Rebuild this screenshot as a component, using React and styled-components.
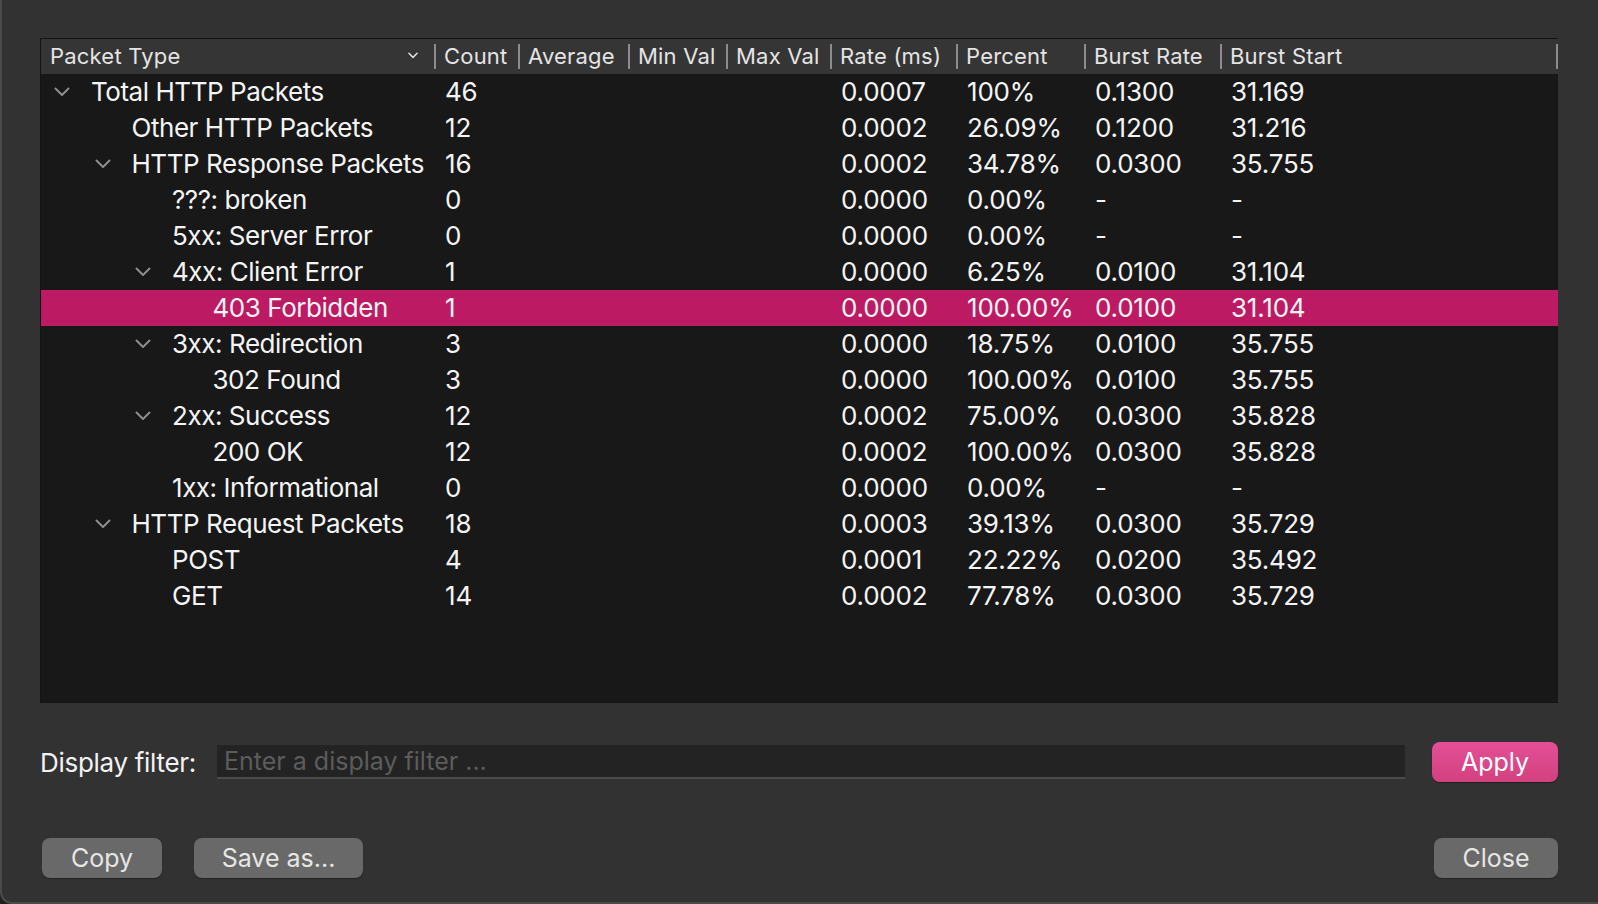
import React from 'react'
import styled, { createGlobalStyle } from 'styled-components'

const GlobalStyle = createGlobalStyle`
  html, body {
    margin: 0;
    padding: 0;
    background: #1f1f1f;
    overflow: hidden;
  }
  body {
    font-family: Inter, "Open Sans", "Liberation Sans", sans-serif;
    -webkit-font-smoothing: antialiased;
  }
`

const COLS = '393px 84px 110px 98px 104px 126px 128px 136px 1fr'

const Window = styled.div`
  box-sizing: border-box;
  width: 1598px;
  height: 904px;
  background: #323232;
  border-left: 2px solid #4a4a4a;
  border-bottom: 2px solid #4a4a4a;
  border-bottom-left-radius: 12px;
  padding: 38px 40px 24px 38px;
  display: flex;
  flex-direction: column;
`

const Table = styled.div`
  height: 665px;
  background: #181818;
  border: 1px solid #141414;
  border-right: none;
  display: flex;
  flex-direction: column;
`

const HeaderRow = styled.div`
  display: grid;
  grid-template-columns: ${COLS};
  height: 35px;
  background: #353535;
`

const HeaderCell = styled.div`
  display: flex;
  align-items: center;
  color: #e4e4e4;
  font-size: 22px;
  letter-spacing: 0.2px;
  padding-bottom: 2px;
  padding-left: ${p => (p.$first ? '9px' : '0')};
  padding-right: ${p => (p.$first ? '16px' : '0')};
`

const Divider = styled.span`
  width: 2px;
  height: 25px;
  margin-top: 2px;
  background: #8c8c8c;
  margin-right: ${p => (p.$end ? '0' : '8px')};
  flex-shrink: 0;
`

const HeaderLabel = styled.span`
  flex: 1;
  white-space: nowrap;
`

const Row = styled.div`
  display: grid;
  grid-template-columns: ${COLS};
  height: 36px;
  padding-bottom: 1px;
  box-sizing: border-box;
  align-items: center;
  background: ${p => (p.$selected ? '#bc1b64' : 'transparent')};
  color: #f4f4f4;
  font-size: 26px;
  letter-spacing: -0.2px;
`

const NameCell = styled.div`
  display: flex;
  align-items: center;
  padding-left: ${p => 13 + p.$level * 40.5}px;
  letter-spacing: -0.45px;
  white-space: nowrap;
`

const Toggle = styled.span`
  width: 37px;
  flex-shrink: 0;
  display: flex;
  align-items: center;
`

const Cell = styled.div`
  padding-left: 11px;
  white-space: nowrap;
`

const FilterBar = styled.div`
  display: flex;
  align-items: center;
  margin-top: 39px;
  height: 40px;
`

const FilterLabel = styled.label`
  width: 177px;
  flex-shrink: 0;
  color: #f2f2f2;
  font-size: 26px;
  letter-spacing: -0.3px;
`

const FilterInput = styled.input`
  flex: 1;
  height: 34px;
  box-sizing: border-box;
  background: #232323;
  border: none;
  border-bottom: 2px solid #4b4b4b;
  color: #eee;
  font-family: inherit;
  font-size: 25px;
  padding: 0 7px;
  outline: none;

  &::placeholder {
    color: #5c5c5c;
  }
`

const Button = styled.button`
  box-sizing: border-box;
  height: 40px;
  width: ${p => p.$width}px;
  border: none;
  border-radius: 8px;
  font-family: inherit;
  font-size: 25px;
  color: ${p => (p.$primary ? '#ffffff' : '#e6e6e6')};
  background: ${p =>
    p.$primary ? 'linear-gradient(#e44f96, #d3417f)' : '#696969'};
  box-shadow: 0 1px 1px rgba(0, 0, 0, 0.35);
  padding: 0;
`

const ApplyButton = styled(Button)`
  margin-left: 27px;
`

const ButtonBar = styled.div`
  display: flex;
  align-items: center;
  gap: 32px;
  margin-top: 56px;
  padding-left: 2px;
`

const Spacer = styled.div`
  flex: 1;
`

const Chevron = ({ size = 16, color = '#8d8d8d', weight = 2 }) => (
  <svg width={size} height={size / 2 + 2} viewBox="0 0 16 10">
    <path d="M1.5 1.5 L8 8 L14.5 1.5" fill="none" stroke={color} strokeWidth={weight} strokeLinecap="round" strokeLinejoin="round" />
  </svg>
)

const columns = ['Packet Type', 'Count', 'Average', 'Min Val', 'Max Val', 'Rate (ms)', 'Percent', 'Burst Rate', 'Burst Start']

const rows = [
  { level: 0, open: true, name: 'Total HTTP Packets', count: '46', rate: '0.0007', pct: '100%', br: '0.1300', bs: '31.169' },
  { level: 1, name: 'Other HTTP Packets', count: '12', rate: '0.0002', pct: '26.09%', br: '0.1200', bs: '31.216' },
  { level: 1, open: true, name: 'HTTP Response Packets', count: '16', rate: '0.0002', pct: '34.78%', br: '0.0300', bs: '35.755' },
  { level: 2, name: '???: broken', count: '0', rate: '0.0000', pct: '0.00%', br: '-', bs: '-' },
  { level: 2, name: '5xx: Server Error', count: '0', rate: '0.0000', pct: '0.00%', br: '-', bs: '-' },
  { level: 2, open: true, name: '4xx: Client Error', count: '1', rate: '0.0000', pct: '6.25%', br: '0.0100', bs: '31.104' },
  { level: 3, name: '403 Forbidden', count: '1', rate: '0.0000', pct: '100.00%', br: '0.0100', bs: '31.104', selected: true },
  { level: 2, open: true, name: '3xx: Redirection', count: '3', rate: '0.0000', pct: '18.75%', br: '0.0100', bs: '35.755' },
  { level: 3, name: '302 Found', count: '3', rate: '0.0000', pct: '100.00%', br: '0.0100', bs: '35.755' },
  { level: 2, open: true, name: '2xx: Success', count: '12', rate: '0.0002', pct: '75.00%', br: '0.0300', bs: '35.828' },
  { level: 3, name: '200 OK', count: '12', rate: '0.0002', pct: '100.00%', br: '0.0300', bs: '35.828' },
  { level: 2, name: '1xx: Informational', count: '0', rate: '0.0000', pct: '0.00%', br: '-', bs: '-' },
  { level: 1, open: true, name: 'HTTP Request Packets', count: '18', rate: '0.0003', pct: '39.13%', br: '0.0300', bs: '35.729' },
  { level: 2, name: 'POST', count: '4', rate: '0.0001', pct: '22.22%', br: '0.0200', bs: '35.492' },
  { level: 2, name: 'GET', count: '14', rate: '0.0002', pct: '77.78%', br: '0.0300', bs: '35.729' },
]

export default function App() {
  return (
    <>
      <GlobalStyle />
      <Window>
        <Table>
          <HeaderRow>
            {columns.map((c, i) => (
              <HeaderCell key={c} $first={i === 0}>
                {i > 0 && <Divider />}
                <HeaderLabel>{c}</HeaderLabel>
                {i === 0 && <Chevron size={10} color="#e0e0e0" weight={2.4} />}
                {i === columns.length - 1 && <Divider $end />}
              </HeaderCell>
            ))}
          </HeaderRow>
          {rows.map(r => (
            <Row key={r.name} $selected={r.selected}>
              <NameCell $level={r.level}>
                <Toggle>{r.open && <Chevron />}</Toggle>
                {r.name}
              </NameCell>
              <Cell>{r.count}</Cell>
              <Cell />
              <Cell />
              <Cell />
              <Cell>{r.rate}</Cell>
              <Cell>{r.pct}</Cell>
              <Cell>{r.br}</Cell>
              <Cell>{r.bs}</Cell>
            </Row>
          ))}
        </Table>

        <FilterBar>
          <FilterLabel>Display filter:</FilterLabel>
          <FilterInput placeholder="Enter a display filter ..." />
          <ApplyButton $primary $width={126}>Apply</ApplyButton>
        </FilterBar>

        <ButtonBar>
          <Button $width={120}>Copy</Button>
          <Button $width={169}>Save as...</Button>
          <Spacer />
          <Button $width={124}>Close</Button>
        </ButtonBar>
      </Window>
    </>
  )
}
